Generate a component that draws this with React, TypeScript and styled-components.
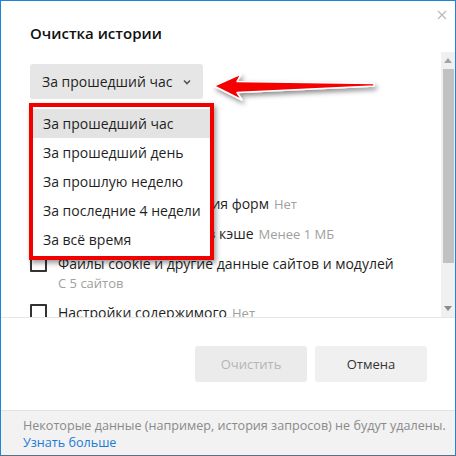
import React from "react";
import styled, { createGlobalStyle } from "styled-components";

const GlobalStyle = createGlobalStyle`
  html, body { margin: 0; padding: 0; background: #fff; }
  body { font-family: "Open Sans", "Noto Sans", sans-serif; color: #1f1f1f; }
  * { box-sizing: border-box; }
`;

const Dialog = styled.div`
  position: relative;
  width: 456px;
  height: 456px;
  border: 1px solid #1f83d8;
  border-bottom-color: #5a6f84;
  background: #fff;
  display: flex;
  flex-direction: column;
  overflow: hidden;
`;

const Header = styled.div`
  height: 51px;
  padding: 22px 0 0 29px;
  flex: none;
`;

const Title = styled.h1`
  margin: 0;
  font-size: 15px;
  line-height: 20px;
  font-weight: 600;
  color: #111;
`;

const CloseButton = styled.button`
  position: absolute;
  top: 8px;
  right: 7px;
  width: 12px;
  height: 12px;
  padding: 0;
  border: 0;
  background: none;
  display: flex;
  align-items: center;
  justify-content: center;
`;

const Body = styled.div`
  height: 266px;
  flex: none;
  display: flex;
  border-bottom: 1px solid #e6e6e6;
`;

const Content = styled.div`
  flex: 1;
  padding: 12px 0 0 29px;
  overflow: hidden;
`;

const SelectWrap = styled.div`
  position: relative;
  width: 173px;
`;

const SelectButton = styled.button`
  width: 173px;
  height: 35px;
  border: 0;
  border-radius: 3px;
  background: #e6e6e6;
  padding: 0 12px;
  display: flex;
  align-items: center;
  justify-content: space-between;
  font-family: inherit;
  font-size: 14px;
  color: #1f1f1f;
`;

const Menu = styled.ul`
  position: absolute;
  top: 39px;
  left: -1px;
  width: 185px;
  margin: 0;
  padding: 2px 0;
  list-style: none;
  background: #fff;
  border: 4px solid #f20000;
  box-shadow: 2px 3px 5px rgba(0, 0, 0, 0.4);
  z-index: 2;
`;

const MenuItem = styled.li<{ $active?: boolean }>`
  height: 29px;
  padding-left: 10px;
  display: flex;
  align-items: center;
  font-size: 14px;
  color: #1f1f1f;
  background: ${(p) => (p.$active ? "#e3e3e3" : "transparent")};
`;

const List = styled.div`
  margin-top: 30px;
`;

const Row = styled.div`
  display: grid;
  grid-template-columns: 17px 1fr;
  column-gap: 11px;
  padding: 6px 0;
`;

const Box = styled.span`
  width: 17px;
  height: 17px;
  border: 2px solid #333;
  border-radius: 1px;
  background: #fff;
`;

const Label = styled.div`
  font-size: 14px;
  line-height: 17px;
  color: #1f1f1f;
  white-space: nowrap;
`;

const Meta = styled.span`
  font-size: 13px;
  color: #a0a0a0;
  margin-left: 5px;
`;

const Sub = styled.div`
  margin-top: 2px;
  font-size: 13px;
  line-height: 18px;
  color: #a0a0a0;
`;

const Scrollbar = styled.div`
  width: 14px;
  flex: none;
  background: #f0f0f0;
  display: flex;
  flex-direction: column;
`;

const ScrollArrow = styled.div`
  height: 17px;
  flex: none;
  display: flex;
  align-items: center;
  justify-content: center;
`;

const Thumb = styled.div`
  height: 194px;
  margin: 0 1px 0 2px;
  background: #c1c1c1;
  flex: none;
`;

const Spacer = styled.div`
  flex: 1;
`;

const Actions = styled.div`
  height: 92px;
  flex: none;
  display: flex;
  align-items: center;
  justify-content: flex-end;
  gap: 8px;
  padding-right: 28px;
`;

const ActionButton = styled.button<{ $disabled?: boolean }>`
  width: 112px;
  height: 36px;
  border: 0;
  border-radius: 3px;
  font-family: inherit;
  font-size: 13px;
  background: ${(p) => (p.$disabled ? "#ebebeb" : "#f0f0f0")};
  color: ${(p) => (p.$disabled ? "#b5b5b5" : "#333")};
`;

const Footer = styled.div`
  flex: 1;
  background: #f2f2f2;
  border-top: 1px solid #e2e2e2;
  padding: 6px 8px 0 22px;
  font-size: 12.6px;
  line-height: 17px;
  color: #8a8a8a;
`;

const Note = styled.div`
  white-space: nowrap;
`;

const Link = styled.a`
  display: block;
  color: #1c7ad6;
  text-decoration: none;
`;

const ArrowOverlay = styled.svg`
  position: absolute;
  left: 205px;
  top: 66px;
  pointer-events: none;
  z-index: 3;
`;

const rows: { label: string; meta?: string; sub?: string }[] = [
  { label: "Просмотры", meta: "22 адреса" },
  { label: "Загрузки", meta: "Нет" },
  { label: "Данные автозаполнения форм", meta: "Нет" },
  { label: "Файлы, сохранённые в кэше", meta: "Менее 1 МБ" },
  { label: "Файлы cookie и другие данные сайтов и модулей", sub: "С 5 сайтов" },
  { label: "Настройки содержимого", meta: "Нет" },
  { label: "Данные приложений", meta: "Нет" },
];

const options = [
  "За прошедший час",
  "За прошедший день",
  "За прошлую неделю",
  "За последние 4 недели",
  "За всё время",
];

export default function App() {
  return (
    <>
      <GlobalStyle />
      <Dialog>
        <Header>
          <Title>Очистка истории</Title>
        </Header>
        <CloseButton aria-label="Закрыть">
          <svg width="10" height="10" viewBox="0 0 10 10">
            <path d="M1 1L9 9M9 1L1 9" stroke="#b8b8b8" strokeWidth="1.2" />
          </svg>
        </CloseButton>
        <Body>
          <Content>
            <SelectWrap>
              <SelectButton>
                <span>За прошедший час</span>
                <svg width="8" height="6" viewBox="0 0 8 6">
                  <path d="M1 1.5L4 4.5L7 1.5" fill="none" stroke="#555" strokeWidth="1.6" />
                </svg>
              </SelectButton>
              <Menu>
                {options.map((o, i) => (
                  <MenuItem key={o} $active={i === 0}>
                    {o}
                  </MenuItem>
                ))}
              </Menu>
            </SelectWrap>
            <List>
              {rows.map((r) => (
                <Row key={r.label}>
                  <Box />
                  <div>
                    <Label>
                      {r.label}
                      {r.meta && <Meta>{r.meta}</Meta>}
                    </Label>
                    {r.sub && <Sub>{r.sub}</Sub>}
                  </div>
                </Row>
              ))}
            </List>
          </Content>
          <Scrollbar>
            <ScrollArrow>
              <svg width="8" height="5" viewBox="0 0 8 5">
                <path d="M0 5L4 0L8 5Z" fill="#a3a3a3" />
              </svg>
            </ScrollArrow>
            <Thumb />
            <Spacer />
            <ScrollArrow>
              <svg width="8" height="5" viewBox="0 0 8 5">
                <path d="M0 0L4 5L8 0Z" fill="#8a8a8a" />
              </svg>
            </ScrollArrow>
          </Scrollbar>
        </Body>
        <Actions>
          <ActionButton $disabled>Очистить</ActionButton>
          <ActionButton>Отмена</ActionButton>
        </Actions>
        <Footer>
          <Note>Некоторые данные (например, история запросов) не будут удалены.</Note>
          <Link href="#">Узнать больше</Link>
        </Footer>
        <ArrowOverlay width="180" height="44" viewBox="205 66 180 44">
          <defs>
            <filter id="sh" x="-10%" y="-50%" width="120%" height="200%">
              <feDropShadow dx="2" dy="3" stdDeviation="2.5" floodColor="#000" floodOpacity="0.45" />
            </filter>
          </defs>
          <path
            d="M213 85 L240 73 L236 80.5 L373 82.5 L373 85 L236 91.5 L241 99 Z"
            fill="#f50000"
            stroke="#fff"
            strokeWidth="1.5"
            strokeLinejoin="round"
            filter="url(#sh)"
          />
        </ArrowOverlay>
      </Dialog>
    </>
  );
}
